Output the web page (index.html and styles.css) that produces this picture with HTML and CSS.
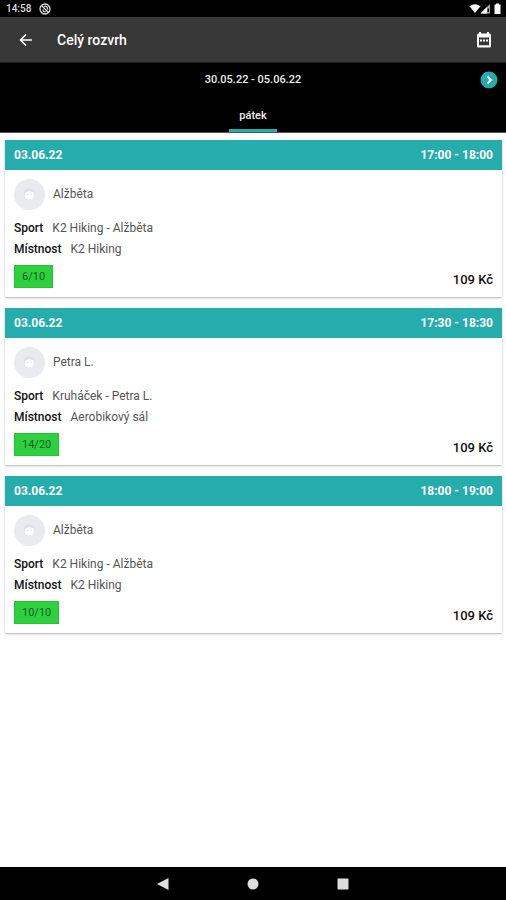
FILE: index.html
```html
<!DOCTYPE html>
<html lang="cs">
<head>
<meta charset="utf-8">
<meta name="viewport" content="width=device-width, initial-scale=1">
<title>Celý rozvrh</title>
<link rel="stylesheet" href="styles.css">
</head>
<body>
<div class="status">
  <span class="status-left">
    <span class="clock">14:58</span>
    <svg width="12" height="12" viewBox="0 0 12 12" fill="none" stroke="#ddd" stroke-width="1.3"><circle cx="6" cy="6" r="5"/><path d="M2.500 2.500l7 7M4 6.500a2 2 0 0 0 3 2M5 3.500a2.500 2.500 0 0 1 3.500 3"/></svg>
  </span>
  <svg width="33" height="12" viewBox="0 0 33 12" fill="#fff"><path d="M0.500 3.200Q6 -0.800 11.500 3.200L6 10Z"/><path d="M21 1V10.500H11.500Z" fill="#aaa"/><path d="M18 4V10.500H11.500Z"/><path d="M18.500 5.500h1.500v3.500h-1.500z" fill="#000"/><path d="M25.500 1.500h1.500V0.500h3v1h1.500V11H25.500Z"/></svg>
</div>
<header class="appbar">
  <button class="icon-button" aria-label="Zpět"><svg width="14" height="14" viewBox="0 0 14 14" fill="none" stroke="#fff" stroke-width="1.500"><path d="M13 7H2M7 1.500L1.500 7L7 12.500"/></svg></button>
  <h1>Celý rozvrh</h1>
  <button class="icon-button" aria-label="Kalendář"><svg width="16" height="16" viewBox="0 0 16 16"><path fill="#fff" fill-rule="evenodd" d="M3 0H5V1.500H11V0H13V1.500H13.500Q15 1.500 15 3V14Q15 15.500 13.500 15.500H2.500Q1 15.500 1 14V3Q1 1.500 2.500 1.500H3ZM3 5.500V13.300H13V5.500Z"/><path fill="#fff" d="M4 7.500h2v2H4zM7 7.500h2v2H7zM10 7.500h2v2h-2z"/></svg></button>
</header>
<nav class="week">
  <div class="range">
    <span>30.05.22 - 05.06.22</span>
    <button class="icon-button next" aria-label="Další týden"><svg width="18" height="18" viewBox="0 0 18 18"><circle cx="9" cy="9" r="8.500" fill="#25acad"/><path d="M7.500 5.500L11 9L7.500 12.500" fill="none" stroke="#fff" stroke-width="1.800"/></svg></button>
  </div>
  <div class="tabs"><a class="tab" href="#patek">pátek</a></div>
</nav>
<main id="patek">
  <article class="card">
    <div class="card-head"><span>03.06.22</span><span>17:00 - 18:00</span></div>
    <div class="card-body">
      <div class="person"><svg class="avatar" viewBox="0 0 31 31"><circle cx="15.500" cy="15.500" r="15.500" fill="#e9eaed"/><path d="M9.500 16Q9 9.500 15.500 9.500T21.500 16Z" fill="#dfe1e4"/><path d="M11 14Q15.500 10.500 20 14V16Q20 20 15.500 20T11 16Z" fill="#fff"/><path d="M13 15h1v1h-1zM17 15h1v1h-1z" fill="#d4d6da"/></svg><span>Alžběta</span></div>
      <dl><div><dt>Sport</dt><dd>K2 Hiking - Alžběta</dd></div><div><dt>Místnost</dt><dd>K2 Hiking</dd></div></dl>
      <div class="foot"><span class="badge">6/10</span><span class="price">109 Kč</span></div>
    </div>
  </article>
  <article class="card">
    <div class="card-head"><span>03.06.22</span><span>17:30 - 18:30</span></div>
    <div class="card-body">
      <div class="person"><svg class="avatar" viewBox="0 0 31 31"><circle cx="15.500" cy="15.500" r="15.500" fill="#e9eaed"/><path d="M9.500 16Q9 9.500 15.500 9.500T21.500 16Z" fill="#dfe1e4"/><path d="M11 14Q15.500 10.500 20 14V16Q20 20 15.500 20T11 16Z" fill="#fff"/><path d="M13 15h1v1h-1zM17 15h1v1h-1z" fill="#d4d6da"/></svg><span>Petra L.</span></div>
      <dl><div><dt>Sport</dt><dd>Kruháček - Petra L.</dd></div><div><dt>Místnost</dt><dd>Aerobikový sál</dd></div></dl>
      <div class="foot"><span class="badge">14/20</span><span class="price">109 Kč</span></div>
    </div>
  </article>
  <article class="card">
    <div class="card-head"><span>03.06.22</span><span>18:00 - 19:00</span></div>
    <div class="card-body">
      <div class="person"><svg class="avatar" viewBox="0 0 31 31"><circle cx="15.500" cy="15.500" r="15.500" fill="#e9eaed"/><path d="M9.500 16Q9 9.500 15.500 9.500T21.500 16Z" fill="#dfe1e4"/><path d="M11 14Q15.500 10.500 20 14V16Q20 20 15.500 20T11 16Z" fill="#fff"/><path d="M13 15h1v1h-1zM17 15h1v1h-1z" fill="#d4d6da"/></svg><span>Alžběta</span></div>
      <dl><div><dt>Sport</dt><dd>K2 Hiking - Alžběta</dd></div><div><dt>Místnost</dt><dd>K2 Hiking</dd></div></dl>
      <div class="foot"><span class="badge">10/10</span><span class="price">109 Kč</span></div>
    </div>
  </article>
</main>
<footer class="system">
  <button class="icon-button" aria-label="Zpět v systému"><svg width="12" height="12" viewBox="0 0 12 12"><path d="M0 6L11.500 0V12Z" fill="#ddd"/></svg></button>
  <button class="icon-button" aria-label="Domů"><svg width="12" height="12" viewBox="0 0 12 12"><circle cx="6" cy="6" r="5.500" fill="#ddd"/></svg></button>
  <button class="icon-button" aria-label="Přehled"><svg width="12" height="12" viewBox="0 0 12 12"><rect x="0.500" y="0.500" width="11" height="11" rx="1" fill="#ddd"/></svg></button>
</footer>
</body>
</html>
```
FILE: styles.css
```css
* { box-sizing: border-box; }
body {
  margin: 0;
  min-height: 100vh;
  display: flex;
  flex-direction: column;
  background: #fff;
  color: #111;
  font: 12px/21px Roboto, sans-serif;
}
svg { display: block; }
.icon-button {
  display: grid;
  place-items: center;
  padding: 0;
  border: 0;
  background: none;
}
.status {
  display: flex;
  align-items: center;
  justify-content: space-between;
  height: 17px;
  padding: 0 4px 0 6px;
  background: #000;
}
.status-left { display: flex; align-items: center; gap: 8px; }
.clock { color: #ddd; font-size: 10px; font-weight: 500; line-height: 17px; }
.appbar {
  display: flex;
  align-items: center;
  height: 46px;
  padding: 0 14px 0 19px;
  background: #383838;
  border-bottom: 1px solid #1c1c1c;
}
h1 {
  flex: 1;
  margin: 0 0 0 24px;
  color: #fff;
  font-size: 14px;
  font-weight: 500;
  line-height: 22px;
}
.week { background: #000; color: #eee; border-bottom: 1px solid #555; }
.range {
  display: grid;
  grid-template-columns: 1fr auto 1fr;
  align-items: center;
  height: 33px;
  padding: 0 8px;
  font-size: 11px;
  font-weight: 500;
}
.range span { grid-column: 2; }
.next { justify-self: end; }
.tabs { display: flex; justify-content: center; }
.tab {
  height: 36px;
  padding: 9px 10px 0;
  border-bottom: 3px solid #25acad;
  color: #eee;
  font-size: 11px;
  font-weight: 500;
  text-decoration: none;
}
main {
  flex: 1;
  display: flex;
  flex-direction: column;
  gap: 11px;
  padding: 7px 4px 11px 5px;
}
.card { background: #fff; box-shadow: 0 1px 2px rgba(0, 0, 0, 0.3); }
.card-head {
  display: flex;
  justify-content: space-between;
  padding: 5px 9px 4px;
  background: #25acad;
  color: #fff;
  font-size: 12px;
  font-weight: 700;
}
.card-body { padding: 9px; }
.person { display: flex; align-items: center; gap: 8px; color: #555; line-height: 23px; }
.avatar { width: 31px; height: 31px; }
dl { margin: 8px 0 5px; }
dl div { display: flex; gap: 9px; }
dt { font-weight: 500; }
dd { margin: 0; color: #555; }
.foot { display: flex; justify-content: space-between; align-items: flex-end; }
.badge {
  padding: 0 7px;
  border: 1px solid #22c437;
  background: #2ed040;
  color: #165f20;
  font-size: 11px;
}
.price { font-size: 13px; font-weight: 500; line-height: 16px; }
.system {
  display: flex;
  justify-content: center;
  align-items: center;
  gap: 78px;
  height: 33px;
  background: #000;
}
```
